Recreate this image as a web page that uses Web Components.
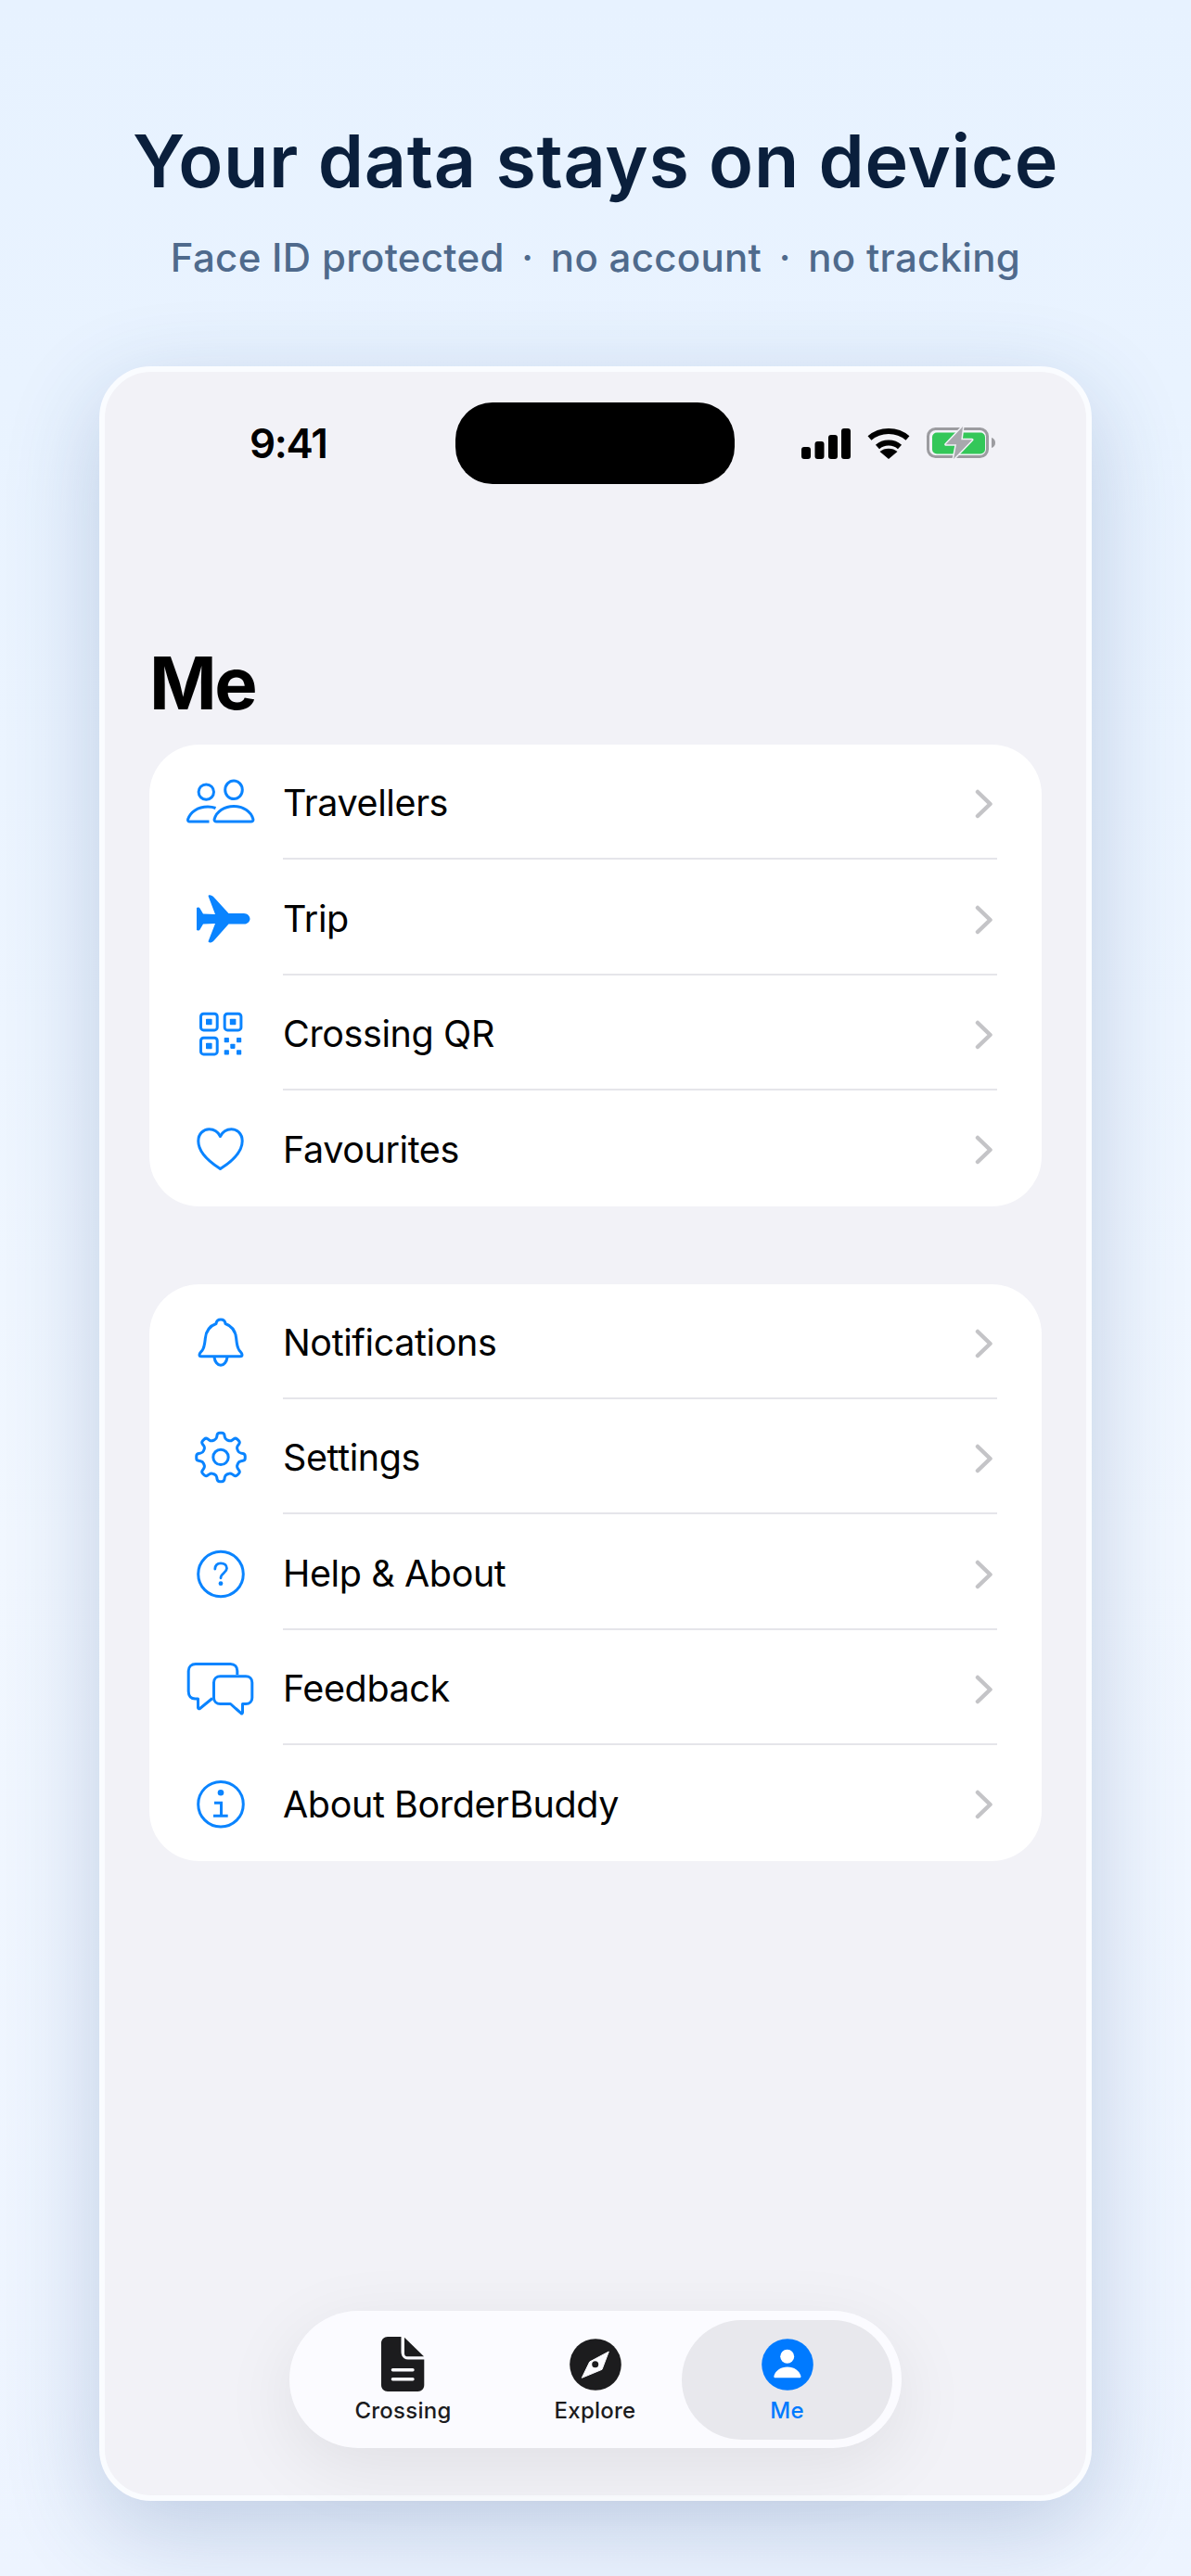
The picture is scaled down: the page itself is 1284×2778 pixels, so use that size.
<!DOCTYPE html>
<html lang="en">
<head>
<meta charset="utf-8">
<title>BorderBuddy</title>
<style>
  html, body { margin: 0; padding: 0; }
  body {
    width: 1284px;
    height: 2778px;
    overflow: hidden;
    background: linear-gradient(180deg, #e7f2ff 0%, #ebf4ff 30%, #f1f7ff 60%, #edf4ff 100%);
    font-family: Inter, "Liberation Sans", sans-serif;
  }
</style>
</head>
<body>
<promo-page>
  <promo-header slot="header" title="Your data stays on device" subtitle="Face ID protected · no account · no tracking"></promo-header>
  <phone-frame>
    <status-bar slot="status"></status-bar>
    <h-title slot="title">Me</h-title>
    <settings-group>
      <settings-row label="Travellers" icon="people"></settings-row>
      <settings-row label="Trip" icon="plane"></settings-row>
      <settings-row label="Crossing QR" icon="qr"></settings-row>
      <settings-row label="Favourites" icon="heart"></settings-row>
    </settings-group>
    <settings-group>
      <settings-row label="Notifications" icon="bell"></settings-row>
      <settings-row label="Settings" icon="gear"></settings-row>
      <settings-row label="Help &amp; About" icon="help"></settings-row>
      <settings-row label="Feedback" icon="chat"></settings-row>
      <settings-row label="About BorderBuddy" icon="info"></settings-row>
    </settings-group>
    <tab-bar slot="tabs"></tab-bar>
  </phone-frame>
</promo-page>

<script>
// gear outline with softened corners, so the markup stays readable
function gearPath(cx, cy, ro, ri, n) {
  const step = Math.PI * 2 / n;
  const pts = [];
  for (let i = 0; i < n; i++) {
    const a = -Math.PI / 2 + i * step;
    [[ro, -0.17], [ro, 0.17], [ri, 0.3], [ri, 0.7]].forEach(([r, f]) => {
      pts.push([cx + r * Math.cos(a + f * step), cy + r * Math.sin(a + f * step)]);
    });
  }
  const lerp = (p, q, t) => [p[0] + (q[0] - p[0]) * t, p[1] + (q[1] - p[1]) * t].map(v => v.toFixed(2)).join(' ');
  let d = '';
  pts.forEach((p, i) => {
    const prev = pts[(i + pts.length - 1) % pts.length];
    const next = pts[(i + 1) % pts.length];
    d += (i === 0 ? 'M' : 'L') + lerp(p, prev, 0.35) + ' Q' + p[0].toFixed(2) + ' ' + p[1].toFixed(2) + ' ' + lerp(p, next, 0.35) + ' ';
  });
  return d + 'Z';
}

const ICONS = {
  people: `<g fill="none" stroke="currentColor" stroke-width="3">
    <circle cx="24.3" cy="21.1" r="8.2"/><ellipse cx="54" cy="18.8" rx="9.3" ry="9.8"/>
    <path d="M34.5 38.5C32 37.5 29 37 26 37C15 37 7 43 4.6 50.5C4.2 52 5 53 6.5 53H27.5"/>
    <path d="M35.5 53C33.7 53 32.7 52 33.2 50.2C35.5 42 44 36.5 54 36.5S72.5 42 74.8 50.2C75.3 52 74.3 53 72.5 53Z"/>
  </g>`,
  plane: `<path fill="currentColor" d="M27 9.5C26 7.8 27 7 29 7.4C30.5 7.8 31.5 8.3 32.5 9.5L48.5 27H65C68.5 27 71.5 30 71.5 32.9C71.5 35.8 68.5 38.5 65 38.5H48.5L32.5 56.5C31.5 57.8 30.5 58.2 29 58.4C27 58.6 26 58 27 56L34 38L21 38.5L17.5 44.5C17 45.5 15 45.8 14 45V21C15 20 17 20.3 17.5 21.5L21 27.5L34 28Z"/>`,
  qr: `<g fill="none" stroke="currentColor" stroke-width="3">
    <rect x="18.5" y="11.2" width="17.7" height="17.7" rx="3"/><rect x="44.2" y="11.2" width="17.7" height="17.7" rx="3"/><rect x="18.5" y="37.2" width="17.7" height="17.7" rx="3"/>
  </g>
  <g fill="currentColor">
    <rect x="24" y="16.7" width="6.6" height="6.6" rx="0.8"/><rect x="49.8" y="16.7" width="6.6" height="6.6" rx="0.8"/><rect x="24" y="42.7" width="6.6" height="6.6" rx="0.8"/>
    <rect x="43.7" y="37" width="5.2" height="5.2" rx="0.8"/><rect x="57" y="37" width="5.2" height="5.2" rx="0.8"/><rect x="50.3" y="43.7" width="5.2" height="5.2" rx="0.8"/>
    <rect x="43.7" y="50.3" width="5.2" height="5.2" rx="0.8"/><rect x="57" y="50.3" width="5.2" height="5.2" rx="0.8"/>
  </g>`,
  heart: `<path fill="none" stroke="currentColor" stroke-width="3" stroke-linejoin="round" d="M39.5 54.5C37 52.5 15.8 41 15.8 24.5C15.8 16.5 21.5 11.8 27.5 11.8C32.5 11.8 37 14.5 39.5 19.5C42 14.5 46.5 11.8 51.5 11.8C57.5 11.8 63.2 16.5 63.2 24.5C63.2 41 42 52.5 39.5 54.5Z"/>`,
  bell: `<g fill="none" stroke="currentColor" stroke-width="3" stroke-linejoin="round">
    <path d="M40 8C42.8 8 44.7 10 45 12.5C52 15 56 20.5 56.7 28.5C57.3 34 57.5 38 60 41.3C61 42.6 63 44.3 63 46C63 47 62.3 47.7 61 47.7H19C17.7 47.7 17 47 17 46C17 44.3 19 42.6 20 41.3C22.5 38 22.7 34 23.3 28.5C24 20.5 28 15 35 12.5C35.3 10 37.2 8 40 8Z"/>
    <path d="M33 48.5C33.5 53.5 36.5 57.3 40 57.3S46.5 53.5 47 48.5"/>
  </g>`,
  help: `<circle cx="40" cy="33.5" r="24.3" fill="none" stroke="currentColor" stroke-width="3"/>
    <path fill="none" stroke="currentColor" stroke-width="2.8" stroke-linecap="round" d="M33.8 28C34 24 36.5 21.8 40 21.8C44 21.8 46.5 24.2 46.5 27.3C46.5 32 40 32.5 40 37.8"/>
    <circle cx="40" cy="43.7" r="2.4" fill="currentColor"/>`,
  chat: `<g fill="none" stroke="currentColor" stroke-width="3" stroke-linejoin="round">
    <path d="M57.8 18V14C57.8 9.5 55 6.5 50.5 6.5H13C8.5 6.5 5.2 9.5 5.2 14V36C5.2 41 8 44 12.5 44H15.5V53.5C15.5 54.8 16.5 55.2 17.5 54.5L31 43.5"/>
    <path d="M39.5 19.8H67C71 19.8 73.8 22.5 73.8 26.5V43C73.8 46.8 71 49.5 67 49.5H63.5V58.5C63.5 59.8 62.8 60.3 62 59.7L50.5 49.5H39.5C35.5 49.5 32.5 46.8 32.5 43V26.5C32.5 22.5 35.5 19.8 39.5 19.8Z"/>
  </g>`,
  info: `<circle cx="40" cy="33.7" r="24.3" fill="none" stroke="currentColor" stroke-width="3"/>
    <circle cx="40" cy="21.2" r="3.3" fill="currentColor"/>
    <path fill="none" stroke="currentColor" stroke-width="3" d="M33 32.2H40.5V46.2M32 46.2H47.7"/>`
};
ICONS.gear = `<path fill="none" stroke="currentColor" stroke-width="3" stroke-linejoin="round" d="${gearPath(40, 32.4, 26.5, 20, 8)}"/>
  <circle cx="40" cy="32.4" r="8.2" fill="none" stroke="currentColor" stroke-width="3"/>`;

class PromoPage extends HTMLElement {
  connectedCallback() {
    this.attachShadow({ mode: 'open' });
    this.shadowRoot.innerHTML = `
      <style>
        :host { display: flex; flex-direction: column; align-items: center; width: 1284px; height: 2778px; }
      </style>
      <slot name="header"></slot>
      <slot></slot>
    `;
  }
}
customElements.define('promo-page', PromoPage);

class PromoHeader extends HTMLElement {
  connectedCallback() {
    const parts = this.getAttribute('subtitle').split(' · ');
    this.attachShadow({ mode: 'open' });
    this.shadowRoot.innerHTML = `
      <style>
        :host { display: block; width: 100%; height: 395px; padding-top: 125.5px; box-sizing: border-box; text-align: center; }
        h1 { margin: 0; font: 600 79px/94px Inter, sans-serif; color: #0a1f3c; letter-spacing: 0.7px; }
        p { margin: 33.5px 0 0; font: 500 42px/50px Inter, sans-serif; color: #4f6a8c; letter-spacing: 0.3px; }
        i { font-style: normal; margin: 0 7px; }
      </style>
      <h1>${this.getAttribute('title')}</h1>
      <p>${parts.join(' <i>·</i> ')}</p>
    `;
  }
}
customElements.define('promo-header', PromoHeader);

class PhoneFrame extends HTMLElement {
  connectedCallback() {
    this.attachShadow({ mode: 'open' });
    this.shadowRoot.innerHTML = `
      <style>
        :host {
          display: flex; flex-direction: column; position: relative;
          width: 1070px; height: 2302px; box-sizing: border-box;
          border: 6px solid #fafcff; border-radius: 56px;
          background: #f2f2f7;
          box-shadow: 0 30px 100px rgba(40, 80, 140, 0.24);
          padding: 0 48px;
        }
        .groups { display: flex; flex-direction: column; gap: 84px; }
      </style>
      <slot name="status"></slot>
      <slot name="title"></slot>
      <div class="groups"><slot></slot></div>
      <slot name="tabs"></slot>
    `;
  }
}
customElements.define('phone-frame', PhoneFrame);

class StatusBar extends HTMLElement {
  connectedCallback() {
    this.attachShadow({ mode: 'open' });
    this.shadowRoot.innerHTML = `
      <style>
        :host { display: flex; align-items: center; height: 88px; margin: 33px -48px 0; position: relative; }
        .time { position: absolute; left: 156px; font: 560 44px/1 Inter, sans-serif; color: #000; letter-spacing: -1.3px; }
        .island { width: 301px; height: 88px; margin-left: 378px; background: #000; border-radius: 40px; }
        .icons { position: absolute; left: 751px; top: 26px; display: flex; align-items: center; gap: 18px; }
        svg { display: block; }
      </style>
      <span class="time">9:41</span>
      <div class="island"></div>
      <div class="icons">
        <svg width="53" height="33" viewBox="0 0 53 33" fill="#000">
          <rect x="0" y="20" width="10" height="13" rx="3"/><rect x="14.5" y="14" width="10" height="19" rx="3"/>
          <rect x="29" y="7" width="10" height="26" rx="3"/><rect x="43" y="0" width="10" height="33" rx="3"/>
        </svg>
        <svg width="46" height="33" viewBox="0 0 46 33" fill="none" stroke="#000" stroke-width="6">
          <path d="M2.5 10.5c11.5-10 29.5-10 41 0"/><path d="M11 20c6.5-6 17.5-6 24 0"/>
          <path fill="#000" stroke="none" d="M23 33L13.5 25c5-4.5 14-4.5 19 0z"/>
        </svg>
        <svg width="74" height="36" viewBox="0 0 74 36">
          <rect x="1.5" y="2.5" width="64" height="30" rx="8" fill="none" stroke="#9c9ca0" stroke-width="3"/>
          <rect x="6" y="6.5" width="57" height="23" rx="5" fill="#34c759"/>
          <path d="M70 12c2.5.5 4 2.8 4 5.500s-1.500 5-4 5.500z" fill="#9c9ca0"/>
          <path d="M39 0L20.7 19.3H32L29 35L49 14.3H37.3Z" fill="#a8a8ad" stroke="#f2f2f7" stroke-width="3" stroke-linejoin="round" paint-order="stroke"/>
        </svg>
      </div>
    `;
  }
}
customElements.define('status-bar', StatusBar);

class HTitle extends HTMLElement {
  connectedCallback() {
    this.attachShadow({ mode: 'open' });
    this.shadowRoot.innerHTML = `
      <style>
        :host { display: block; margin-top: 166.5px; height: 114.5px; }
        div { font: 700 78px/96px Inter, sans-serif; color: #000; letter-spacing: -2.5px; }
      </style>
      <div><slot></slot></div>
    `;
  }
}
customElements.define('h-title', HTitle);

class SettingsGroup extends HTMLElement {
  connectedCallback() {
    this.attachShadow({ mode: 'open' });
    this.shadowRoot.innerHTML = `
      <style>
        :host { display: block; background: #fff; border-radius: 54px; overflow: hidden; }
        ::slotted(settings-row:last-child) { --divider: transparent; }
      </style>
      <slot></slot>
    `;
  }
}
customElements.define('settings-group', SettingsGroup);

class SettingsRow extends HTMLElement {
  connectedCallback() {
    const icon = ICONS[this.getAttribute('icon')] || '';
    this.attachShadow({ mode: 'open' });
    this.shadowRoot.innerHTML = `
      <style>
        :host { display: flex; align-items: center; height: 124.4px; color: #000; }
        .icon { flex: 0 0 144px; padding-left: 37px; box-sizing: border-box; color: #0a84ff; }
        .icon svg { display: block; }
        .body { flex: 1; align-self: stretch; display: flex; align-items: center; margin-right: 48px; padding-top: 6px; box-sizing: border-box; border-bottom: 2px solid var(--divider, #e5e5ea); }
        .label { flex: 1; font: 400 39.5px/1 Inter, sans-serif; letter-spacing: -0.4px; }
        .chev { display: block; margin-right: 4.5px; }
      </style>
      <div class="icon"><svg width="80" height="64" viewBox="0 0 80 64">${icon}</svg></div>
      <div class="body">
        <span class="label">${this.getAttribute('label').replace('&', '&amp;')}</span>
        <svg class="chev" width="20" height="32" viewBox="0 0 20 32" fill="none" stroke="#c4c4c7" stroke-width="4.5" stroke-linecap="round" stroke-linejoin="round"><path d="M3 3l13.5 13L3 29"/></svg>
      </div>
    `;
  }
}
customElements.define('settings-row', SettingsRow);

class TabBar extends HTMLElement {
  connectedCallback() {
    this.attachShadow({ mode: 'open' });
    this.shadowRoot.innerHTML = `
      <style>
        :host {
          position: absolute; left: 199px; top: 2091px;
          width: 660px; height: 148px; box-sizing: border-box;
          display: flex; align-items: stretch; padding: 10px 10px 9px 19px;
          background: #fbfbff; border-radius: 74px;
          box-shadow: 0 20px 80px rgba(0, 0, 0, 0.08);
          font: 500 24px/24px Inter, sans-serif; letter-spacing: 0.25px;
        }
        .tab { flex: 0 0 207px; display: flex; flex-direction: column; align-items: center; padding-top: 18px; box-sizing: border-box; color: #1c1c1e; }
        .tab.on { flex: 0 0 227px; margin-left: -10px; background: #e8e8ed; border-radius: 64.5px; color: #007aff; }
        .glyph { height: 59px; margin-bottom: 9px; display: flex; align-items: center; }
        svg { display: block; }
      </style>
      <div class="tab">
        <div class="glyph"><svg width="46.3" height="59" viewBox="0 0 46.3 59" fill="#1c1c1e">
          <path d="M7 0H21.5V16C21.5 21 24 24.5 29 24.5H46.3V52C46.3 56 43.5 59 39.5 59H7C3 59 0 56 0 52V7C0 3 3 0 7 0Z"/>
          <path d="M25 .7L46 21.3H28.5C26 21.3 25 20 25 18Z"/>
          <rect x="10.7" y="34" width="25" height="3.5" rx="1.7" fill="#fbfbff"/><rect x="10.7" y="44" width="25" height="3.5" rx="1.7" fill="#fbfbff"/>
        </svg></div>
        <span>Crossing</span>
      </div>
      <div class="tab">
        <div class="glyph"><svg width="56" height="56" viewBox="0 0 56 56">
          <circle cx="28" cy="28" r="27.8" fill="#1c1c1e"/>
          <path d="M42.3 14L21.7 25L13.3 42.3L35 33.3Z" fill="#fbfbff" stroke="#fbfbff" stroke-width="1" stroke-linejoin="round"/>
          <circle cx="27.7" cy="27.7" r="3.5" fill="#1c1c1e"/>
        </svg></div>
        <span>Explore</span>
      </div>
      <div class="tab on">
        <div class="glyph"><svg width="56" height="56" viewBox="0 0 56 56">
          <circle cx="28" cy="28" r="27.8" fill="#007aff"/>
          <circle cx="27.7" cy="19.3" r="7.5" fill="#fff"/>
          <path d="M15 42.3C13.8 42.3 13 41.5 13.4 40.2C15 34.5 20.8 30.5 27.9 30.5S40.8 34.5 42.4 40.2C42.8 41.5 42 42.3 40.8 42.3Z" fill="#fff"/>
        </svg></div>
        <span>Me</span>
      </div>
    `;
  }
}
customElements.define('tab-bar', TabBar);
</script>
</body>
</html>
